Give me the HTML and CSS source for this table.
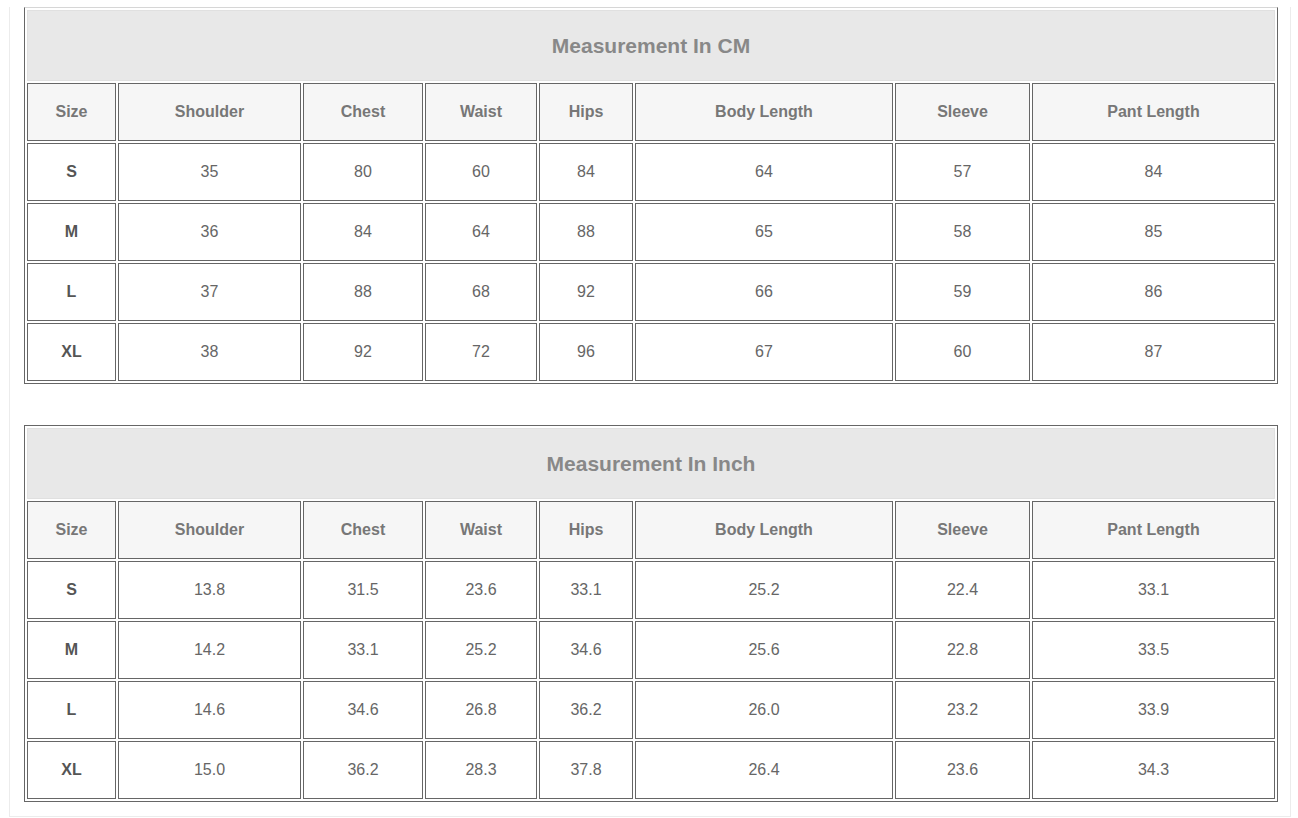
FILE: index.html
```html
<!DOCTYPE html>
<html>
<head>
<meta charset="utf-8">
<link rel="stylesheet" href="styles.css">
</head>
<body>
<div class="frame">
  <table class="size-table first">
    <colgroup>
      <col class="c-size"><col class="c-shoulder"><col class="c-chest"><col class="c-waist"><col class="c-hips"><col class="c-body"><col class="c-sleeve"><col class="c-pant">
    </colgroup>
    <tr><td class="title" colspan="8">Measurement In CM</td></tr>
    <tr class="head"><td>Size</td><td>Shoulder</td><td>Chest</td><td>Waist</td><td>Hips</td><td>Body Length</td><td>Sleeve</td><td>Pant Length</td></tr>
    <tr><td class="sz">S</td><td>35</td><td>80</td><td>60</td><td>84</td><td>64</td><td>57</td><td>84</td></tr>
    <tr><td class="sz">M</td><td>36</td><td>84</td><td>64</td><td>88</td><td>65</td><td>58</td><td>85</td></tr>
    <tr><td class="sz">L</td><td>37</td><td>88</td><td>68</td><td>92</td><td>66</td><td>59</td><td>86</td></tr>
    <tr><td class="sz">XL</td><td>38</td><td>92</td><td>72</td><td>96</td><td>67</td><td>60</td><td>87</td></tr>
  </table>
  <table class="size-table">
    <colgroup>
      <col class="c-size"><col class="c-shoulder"><col class="c-chest"><col class="c-waist"><col class="c-hips"><col class="c-body"><col class="c-sleeve"><col class="c-pant">
    </colgroup>
    <tr><td class="title" colspan="8">Measurement In Inch</td></tr>
    <tr class="head"><td>Size</td><td>Shoulder</td><td>Chest</td><td>Waist</td><td>Hips</td><td>Body Length</td><td>Sleeve</td><td>Pant Length</td></tr>
    <tr><td class="sz">S</td><td>13.8</td><td>31.5</td><td>23.6</td><td>33.1</td><td>25.2</td><td>22.4</td><td>33.1</td></tr>
    <tr><td class="sz">M</td><td>14.2</td><td>33.1</td><td>25.2</td><td>34.6</td><td>25.6</td><td>22.8</td><td>33.5</td></tr>
    <tr><td class="sz">L</td><td>14.6</td><td>34.6</td><td>26.8</td><td>36.2</td><td>26.0</td><td>23.2</td><td>33.9</td></tr>
    <tr><td class="sz">XL</td><td>15.0</td><td>36.2</td><td>28.3</td><td>37.8</td><td>26.4</td><td>23.6</td><td>34.3</td></tr>
  </table>
</div>
</body>
</html>
```

FILE: styles.css
```css
html, body {
  margin: 0;
  padding: 0;
  background: #ffffff;
}

body {
  padding-top: 7px;
  font-family: "Liberation Sans", Arial, sans-serif;
}

.frame {
  box-sizing: border-box;
  margin-left: 9px;
  width: 1282px;
  border: 1px solid #ececec;
  border-top: none;
  padding: 0 0 14px 14px;
}

.size-table {
  table-layout: fixed;
  width: 1254px;
  border-collapse: separate;
  border-spacing: 2px;
  border: 1px solid #666666;
  margin: 0 0 41px 0;
}

.size-table.first {
  border-top-color: #d6d6d6;
}

.size-table:last-child {
  margin-bottom: 0;
}

.c-size { width: 89px; }
.c-shoulder { width: 183px; }
.c-chest { width: 120px; }
.c-waist { width: 112px; }
.c-hips { width: 94px; }
.c-body { width: 258px; }
.c-sleeve { width: 135px; }
.c-pant { width: 243px; }

.size-table td {
  box-sizing: border-box;
  height: 58px;
  padding: 0;
  border: 1px solid #666666;
  text-align: center;
  vertical-align: middle;
  font-size: 16px;
  color: #666666;
  background: #ffffff;
}

.size-table td.title {
  height: 71px;
  background: #e8e8e8;
  border: 1px solid #e0e0e0;
  font-size: 21px;
  font-weight: bold;
  color: #888888;
}

.size-table tr.head td {
  background: #f6f6f6;
  font-weight: bold;
  color: #777777;
}

.size-table td.sz {
  font-weight: bold;
  color: #555555;
}
```
